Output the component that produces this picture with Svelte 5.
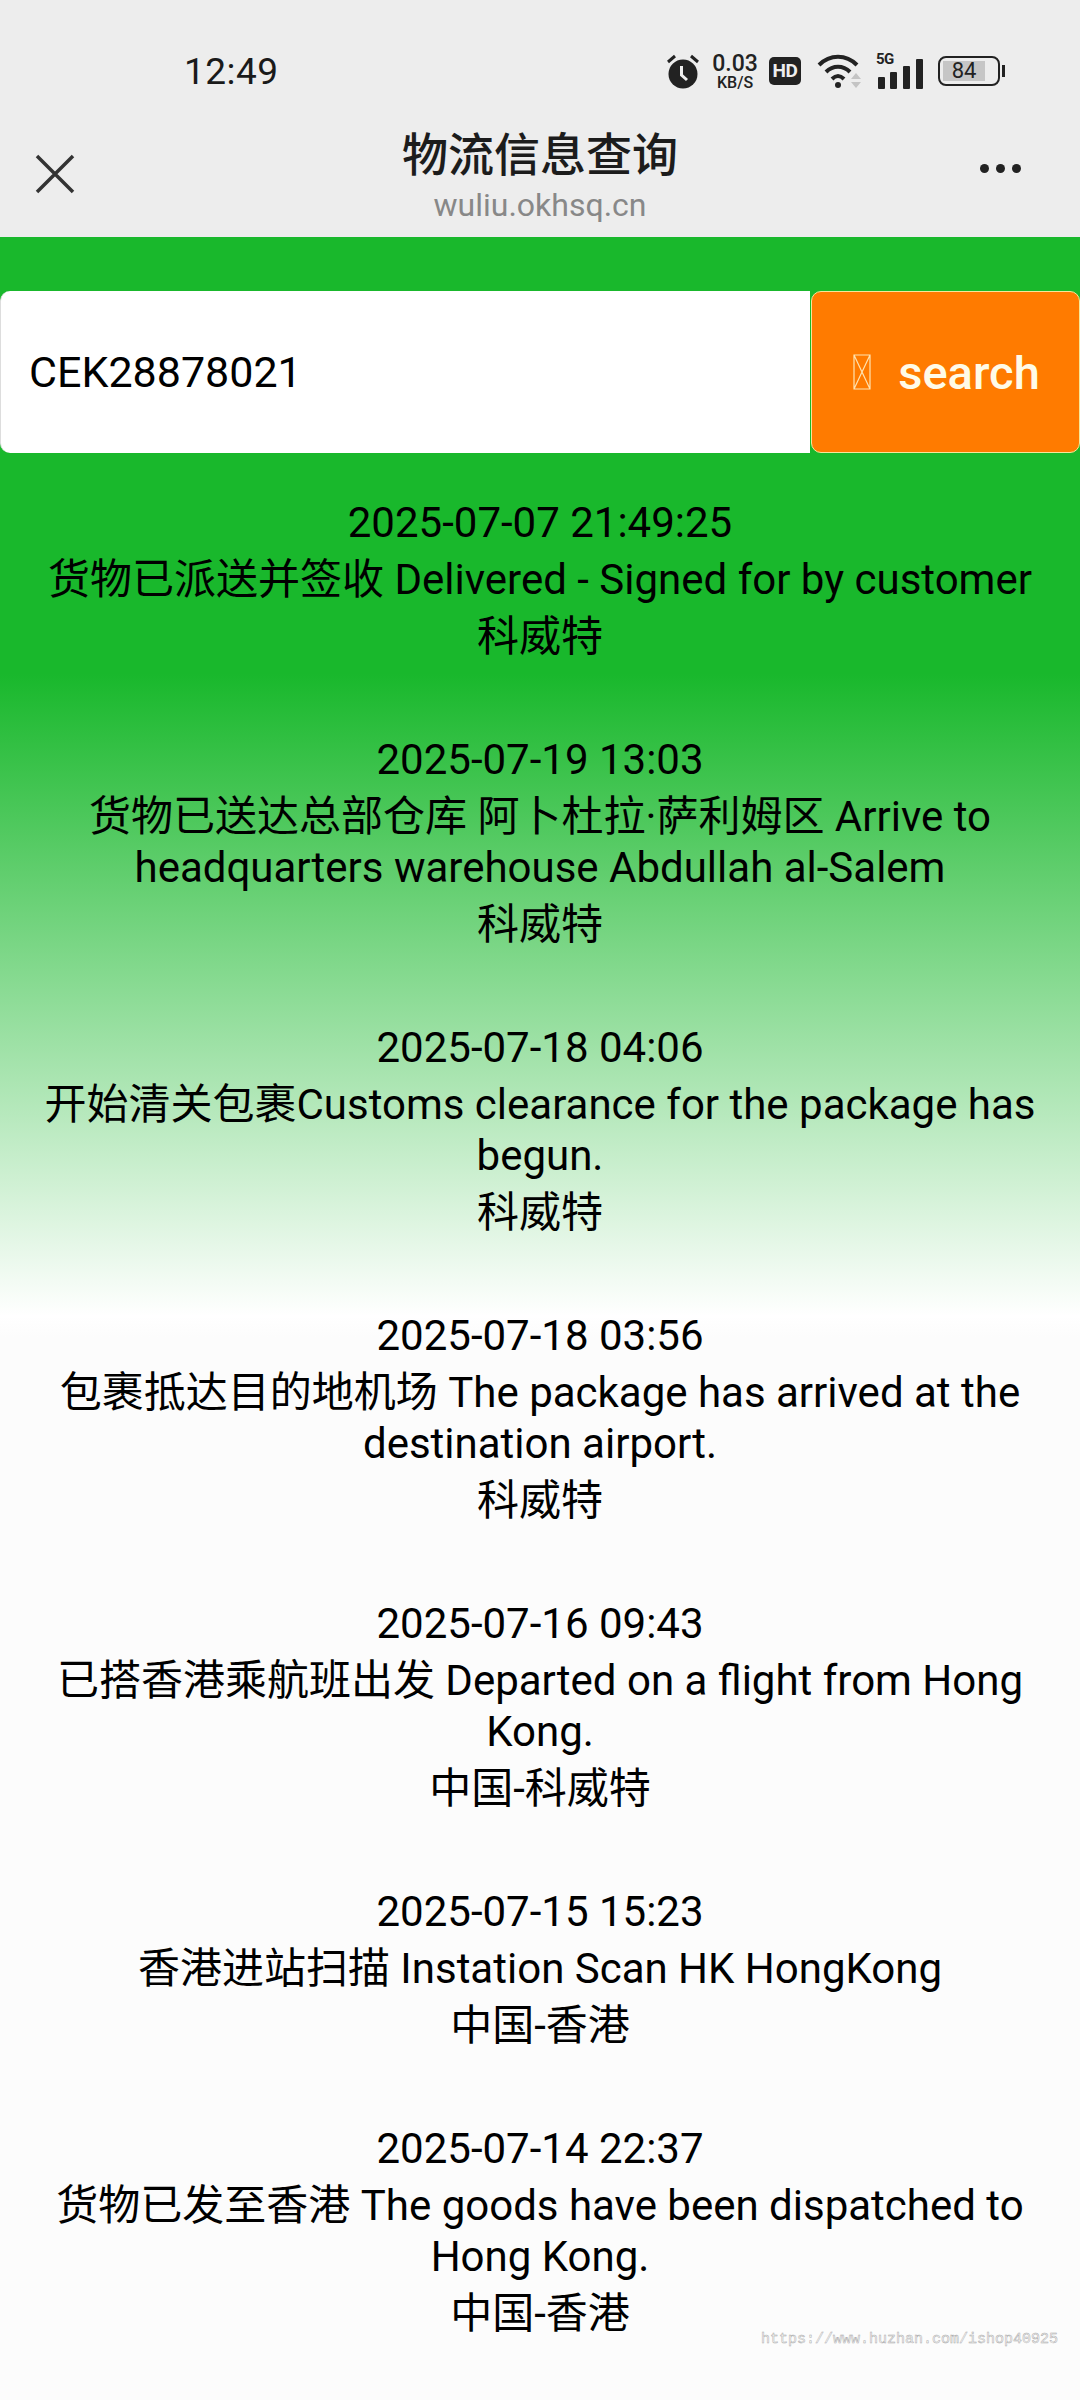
<script>
  const items = [
    { t: '2025-07-07 21:49:25', m: '货物已派送并签收 Delivered - Signed for by customer', c: '科威特' },
    { t: '2025-07-19 13:03', m: '货物已送达总部仓库 阿卜杜拉·萨利姆区 Arrive to headquarters warehouse Abdullah al-Salem', c: '科威特' },
    { t: '2025-07-18 04:06', m: '开始清关包裹Customs clearance for the package has begun.', c: '科威特' },
    { t: '2025-07-18 03:56', m: '包裹抵达目的地机场 The package has arrived at the destination airport.', c: '科威特' },
    { t: '2025-07-16 09:43', m: '已搭香港乘航班出发 Departed on a flight from Hong Kong.', c: '中国-科威特' },
    { t: '2025-07-15 15:23', m: '香港进站扫描 Instation Scan HK HongKong', c: '中国-香港' },
    { t: '2025-07-14 22:37', m: '货物已发至香港 The goods have been dispatched to Hong Kong.', c: '中国-香港' }
  ];
</script>

<div class="page">
  <header class="top">
    <div class="status">
      <span class="time">12:49</span>
      <div class="sysicons">
        <svg class="alarm" width="34" height="36" viewBox="0 0 34 36">
          <circle cx="17" cy="21" r="14.5" fill="#222" />
          <path d="M2 9 L9 3 M32 9 L25 3" stroke="#222" stroke-width="3" fill="none" />
          <path d="M15.5 13 V22 L21 27" stroke="#eee" stroke-width="3" fill="none" />
        </svg>
        <div class="speed"><span class="n">0.03</span><span class="u">KB/S</span></div>
        <div class="hd">HD</div>
        <svg class="wifi" width="46" height="34" viewBox="0 0 46 34">
          <path d="M2 11 C13 0 29 0 40 11" stroke="#222" stroke-width="4" fill="none" />
          <path d="M9 18 C16 11 26 11 33 18" stroke="#222" stroke-width="4" fill="none" />
          <path d="M15 25 C19 21 23 21 27 25" stroke="#222" stroke-width="4" fill="none" />
          <circle cx="21" cy="31" r="3" fill="#222" />
          <path d="M39 19 L44 25 H34 Z M34 28 H44 L39 34 Z" fill="#c4c4c4" />
        </svg>
        <div class="signal">
          <span class="fiveg">5G</span>
          <svg width="46" height="30" viewBox="0 0 46 30">
            <rect x="0" y="18" width="7" height="12" rx="1" fill="#222" />
            <rect x="12" y="13" width="7" height="17" rx="1" fill="#222" />
            <rect x="25" y="7" width="7" height="23" rx="1" fill="#222" />
            <rect x="38" y="0" width="7" height="30" rx="1" fill="#222" />
          </svg>
        </div>
        <div class="battery">
          <div class="cell"><div class="fill"></div><span>84</span></div>
          <div class="nub"></div>
        </div>
      </div>
    </div>
    <div class="nav">
      <svg class="close" width="40" height="40" viewBox="0 0 40 40">
        <path d="M2 2 L38 38 M38 2 L2 38" stroke="#333" stroke-width="3.5" fill="none" />
      </svg>
      <div class="titles">
        <div class="title">物流信息查询</div>
        <div class="sub">wuliu.okhsq.cn</div>
      </div>
      <div class="dots"><i></i><i></i><i></i></div>
    </div>
  </header>

  <main class="body">
    <form class="search" onsubmit={(e) => e.preventDefault()}>
      <input class="field" value="CEK28878021" />
      <button class="btn" type="submit">
        <svg width="18" height="36" viewBox="0 0 18 36">
          <path d="M1 1 H17 V35 H1 Z M1 1 L17 35 M17 1 L1 35" stroke="#ffe3b0" stroke-width="1.2" fill="none" />
        </svg>
        <span>search</span>
      </button>
    </form>

    <div class="list">
      {#each items as it}
        <section class="item">
          <div>{it.t}</div>
          <div class="msg">{it.m}</div>
          <div>{it.c}</div>
        </section>
      {/each}
    </div>
    <div class="mark">https://www.huzhan.com/ishop40925</div>
  </main>
</div>

<style>
  :global(body) { margin: 0; background: #fcfcfc; }
  .page {
    position: relative;
    width: 1080px;
    height: 2400px;
    overflow: hidden;
    font-family: Roboto, "Noto Sans CJK SC", sans-serif;
    color: #000;
  }
  .top { height: 237px; background: #ededed; }
  .status {
    height: 107px;
    box-sizing: border-box;
    padding: 46px 0 0 184px;
    display: flex;
    justify-content: space-between;
    align-items: flex-start;
  }
  .time { font-size: 37px; line-height: 52px; color: #1a1a1a; letter-spacing: 0.5px; }
  .sysicons { display: flex; align-items: center; height: 50px; margin-right: 75px; color: #222; }
  .alarm { margin-left: 0; }
  .speed { display: flex; flex-direction: column; align-items: center; margin-left: 9px; width: 52px; }
  .speed .n { font-size: 23px; line-height: 22px; font-weight: 500; }
  .speed .u { font-size: 16px; line-height: 15px; font-weight: 500; }
  .hd {
    margin-left: 8px; width: 32px; height: 28px; border-radius: 5px; background: #222; color: #eee;
    font-size: 19px; font-weight: 700; line-height: 28px; text-align: center; letter-spacing: -0.5px;
  }
  .wifi { margin-left: 16px; }
  .signal { position: relative; width: 46px; height: 36px; margin-left: 13px; }
  .signal svg { position: absolute; left: 2px; bottom: 0; }
  .fiveg { position: absolute; left: 0; top: -2px; font-size: 15px; line-height: 16px; font-weight: 700; letter-spacing: -0.5px; }
  .battery { display: flex; align-items: center; margin-left: 16px; }
  .cell {
    position: relative; width: 58px; height: 26px; border: 2.5px solid #222; border-radius: 8px;
    box-sizing: content-box;
  }
  .cell .fill { position: absolute; left: 3px; top: 3px; bottom: 3px; width: 42px; background: #c6c6c6; }
  .cell span { position: absolute; inset: 0 10px 0 0; text-align: center; font-size: 22px; line-height: 26px; color: #222; }
  .nub { width: 3px; height: 12px; background: #222; margin-left: 2px; }

  .nav { position: relative; height: 130px; display: flex; justify-content: center; }
  .close { position: absolute; left: 35px; top: 47px; }
  .titles { text-align: center; }
  .title { font-size: 46px; line-height: 62px; font-weight: 500; color: #1c1c1c; margin-top: 17px; }
  .sub { font-size: 32px; line-height: 38px; color: #888; }
  .dots { position: absolute; left: 980px; top: 57px; display: flex; gap: 7px; }
  .dots i { width: 9px; height: 9px; border-radius: 50%; background: #222; display: block; }

  .body {
    position: relative;
    height: 2163px;
    padding-top: 54px;
    box-sizing: border-box;
    background: linear-gradient(#19b82c 0, #19b82c 437px, #fff 1079px, #fcfcfc 1100px);
  }
  .search { display: flex; height: 162px; }
  .field {
    width: 810px; height: 162px; box-sizing: border-box; border: 0; border-left: 1px solid #ddd;
    border-radius: 10px 0 0 10px; padding: 0 0 0 28px; margin: 0; outline: 0;
    background: #fff; font: 400 43px Roboto, sans-serif; color: #000;
  }
  .btn {
    width: 269px; height: 162px; box-sizing: border-box; margin: 0 0 0 1px;
    background: #ff7b00; border: 1.5px solid #f5e79a; border-radius: 10px;
    display: flex; align-items: center; justify-content: center; gap: 27px;
    padding: 0 0 0 2px; color: #fffbe8; font: 500 47px Roboto, sans-serif;
  }
  .list { padding: 44px 24px 0; display: flex; flex-direction: column; gap: 72px; text-align: center; font-size: 42px; line-height: 51px; }
  .msg { margin: 6px 0; }
  .mark {
    position: absolute; left: 761px; top: 2094px; font: 15px "Liberation Mono", monospace;
    color: #fcfcfc; -webkit-text-stroke: 0.5px #aaa; white-space: nowrap;
  }
</style>
